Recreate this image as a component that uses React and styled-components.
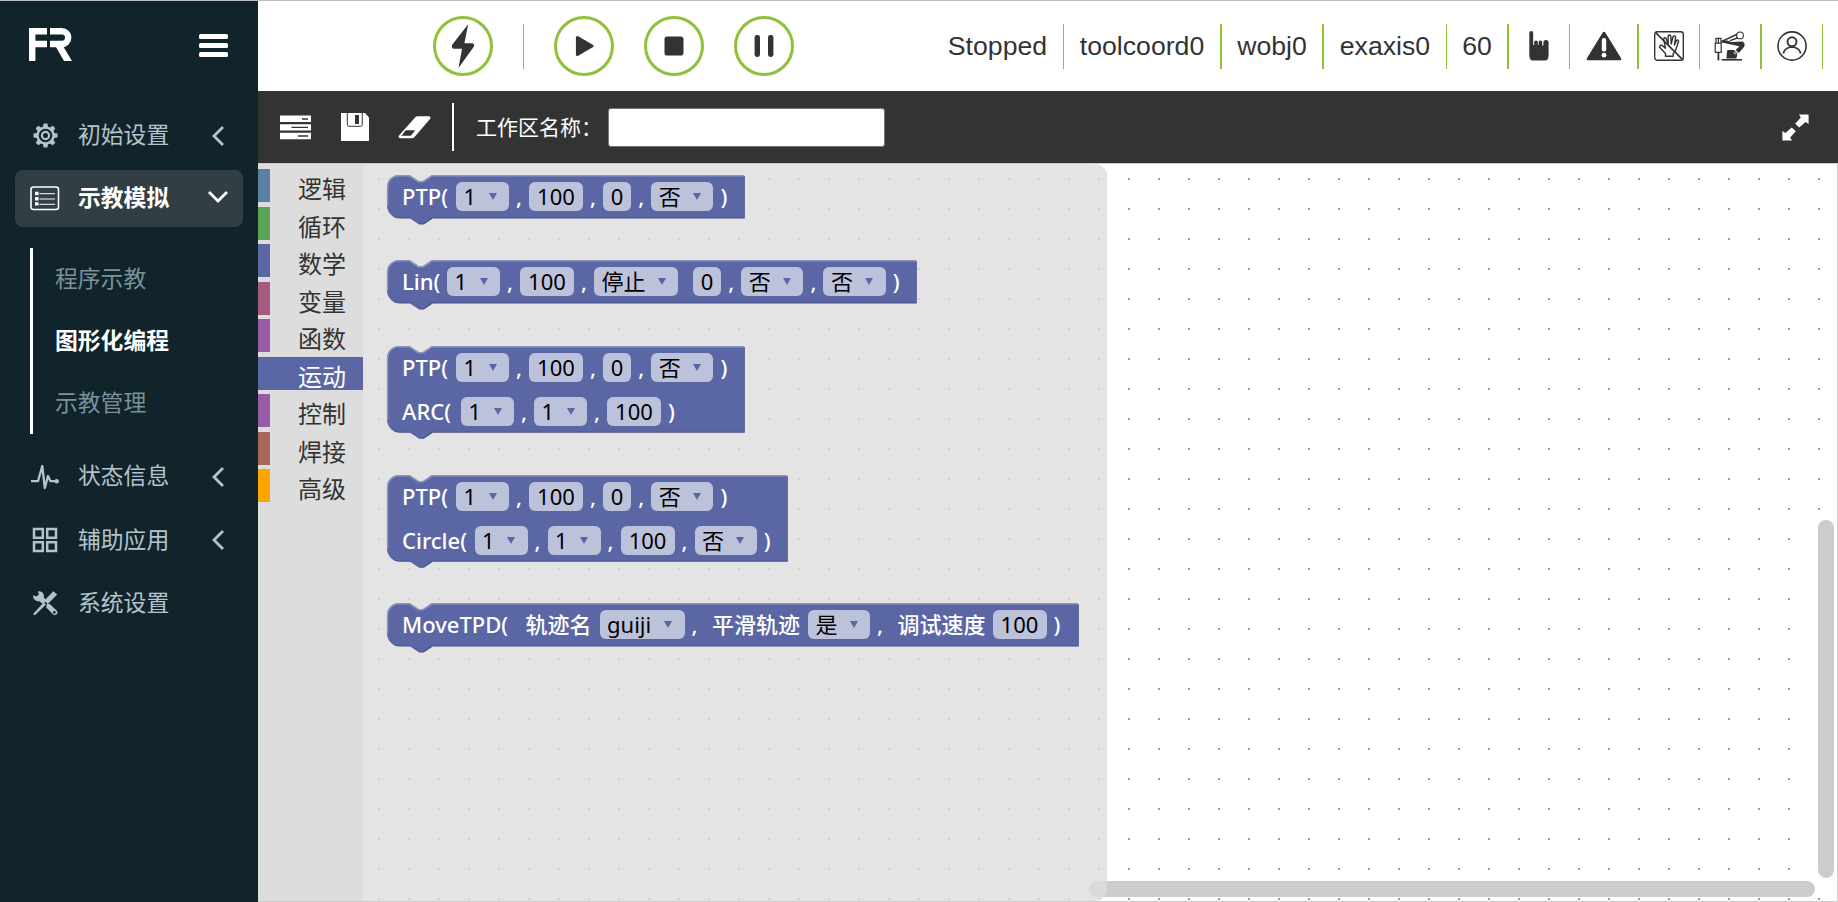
import React from "react";
import styled, { createGlobalStyle } from "styled-components";

const INK = "#333";
const GREEN = "#8fc13a";
const BLOCK = "#5b67a5";

const Global = createGlobalStyle`
  * { box-sizing: border-box; }
  html, body { margin: 0; padding: 0; overflow: hidden; }
  body { font-family: "Noto Sans", "Noto Sans CJK SC", sans-serif; }
  svg { display: block; flex: none; }
`;

const Page = styled.div`
  display: flex;
  width: 1838px;
  height: 902px;
  border-top: 1px solid #bbb;
  background: #fff;
  overflow: hidden;
`;

/* ---------- sidebar ---------- */
const Sidebar = styled.aside`
  width: 258px;
  flex: none;
  background: #11242b;
  font-family: "Noto Sans CJK SC", sans-serif;
`;
const Brand = styled.div`
  height: 106px;
  padding: 27px 30px 0 29px;
  display: flex;
  justify-content: space-between;
`;
const Burger = styled.div`
  width: 29px;
  margin-top: 6px;
  display: flex;
  flex-direction: column;
  gap: 4px;
`;
const BurgerBar = styled.i`
  height: 5px;
  border-radius: 1.5px;
  background: #fff;
`;
const MenuItem = styled.div`
  height: 57px;
  margin: 0 15px 6.3px;
  padding-left: 15px;
  border-radius: 8px;
  display: flex;
  align-items: center;
  color: ${(p) => (p.$active ? "#fff" : "#b4c4cc")};
  background: ${(p) => (p.$active ? "#313f44" : "transparent")};
  font-weight: ${(p) => (p.$active ? 700 : 400)};
`;
const MenuIcon = styled.span`
  width: 30px;
  display: flex;
  justify-content: center;
`;
const MenuText = styled.span`
  margin-left: 18px;
  width: 125px;
  font-size: 22.8px;
  line-height: 30px;
  margin-top: -3px;
`;
const SubMenu = styled.div`
  margin: 21px 0 14px 30px;
  height: 186px;
  border-left: 3px solid #fff;
  padding-left: 22px;
`;
const SubItem = styled.div`
  height: 62px;
  display: flex;
  align-items: center;
  padding-bottom: 3px;
  font-size: 22.8px;
  color: ${(p) => (p.$active ? "#fff" : "#7b929c")};
  font-weight: ${(p) => (p.$active ? 700 : 400)};
`;

/* ---------- header ---------- */
const Main = styled.main`
  flex: 1;
  display: flex;
  flex-direction: column;
  min-width: 0;
`;
const Header = styled.header`
  height: 90px;
  flex: none;
  display: flex;
  justify-content: space-between;
  padding: 15px 15px 0 175px;
`;
const Controls = styled.div`
  display: flex;
  gap: 30px;
`;
const RoundButton = styled.button`
  width: 60px;
  height: 60px;
  padding: 0;
  border: 3px solid ${GREEN};
  border-radius: 50%;
  background: #fff;
  display: flex;
  align-items: center;
  justify-content: center;
`;
const ControlRule = styled.i`
  width: 1px;
  height: 45px;
  margin-top: 8px;
  background: ${GREEN};
`;
const Status = styled.div`
  display: flex;
  margin-top: 8px;
`;
const StatusItem = styled.div`
  width: ${(p) => p.$w}px;
  height: 45px;
  border-right: ${(p) => p.$rule || 1}px solid ${GREEN};
  display: flex;
  align-items: center;
  justify-content: center;
  padding-bottom: 1px;
  font-family: "Liberation Sans", Arial, sans-serif;
  font-size: 26.67px;
  color: ${INK};
  white-space: nowrap;
`;

/* ---------- workspace bar ---------- */
const WorkBar = styled.div`
  height: 72px;
  flex: none;
  background: #333;
  display: flex;
  align-items: center;
  padding: 0 29px 0 22px;
`;
const BarIcon = styled.span`
  width: ${(p) => p.$w}px;
  margin-right: ${(p) => p.$gap}px;
  display: flex;
`;
const BarRule = styled.i`
  width: 2px;
  height: 48px;
  background: #fff;
`;
const BarLabel = styled.label`
  margin: -3px 0 0 22px;
  width: 132px;
  font-family: "Noto Sans CJK SC", sans-serif;
  font-size: 21px;
  line-height: 30px;
  color: #fff;
  white-space: nowrap;
`;
const NameInput = styled.input`
  width: 277px;
  height: 39px;
  padding: 0 10px;
  border: 1px solid #767676;
  border-radius: 3px;
  background: #fff;
`;
const Expand = styled.span`
  margin-left: auto;
`;

/* ---------- block editor ---------- */
const Editor = styled.section`
  flex: 1;
  display: flex;
  position: relative;
  border: 1px solid #ccc;
  border-left: 0;
  background-color: #fff;
  background-image: radial-gradient(circle at 15px 15px, #999 0.9px, transparent 1.3px);
  background-size: 30px 30px;
  background-position: 106px 0px;
`;
const Toolbox = styled.nav`
  width: 105px;
  flex: none;
  padding-top: 5px;
  background: #ddd;
`;
const Category = styled.div`
  height: 33px;
  margin-bottom: 4.5px;
  border-left: 12px solid ${(p) => p.$color};
  padding-left: 28px;
  background: ${(p) => (p.$active ? p.$color : "transparent")};
  color: ${(p) => (p.$active ? "#fff" : INK)};
  font-family: "Noto Sans CJK SC", sans-serif;
  font-size: 24px;
  line-height: 37px;
`;
const Flyout = styled.div`
  width: 744px;
  flex: none;
  position: relative;
  z-index: 1;
  padding: 11px 0 0 23.5px;
  border-radius: 0 12px 12px 0;
  background: rgba(221, 221, 221, 0.8);
`;
const BlockBox = styled.div`
  position: relative;
  width: ${(p) => p.$w}px;
  height: ${(p) => p.$h}px;
  margin-bottom: 42.4px;
`;
const BlockShape = styled.svg`
  position: absolute;
  left: 0;
  top: 0;
  overflow: visible;
`;
const BlockRow = styled.div`
  position: relative;
  display: flex;
  align-items: flex-start;
  height: 43.9px;
  padding: 7px 0 0 15.5px;
`;
const Label = styled.span`
  width: ${(p) => p.$w}px;
  flex: none;
  text-align: ${(p) => p.$align || "left"};
  color: #fff;
  font-size: 22px;
  font-weight: 500;
  line-height: 29px;
  white-space: pre;
`;
const Field = styled.span`
  width: ${(p) => p.$w}px;
  height: 29px;
  flex: none;
  display: flex;
  align-items: center;
  justify-content: ${(p) => (p.$menu ? "space-between" : "center")};
  padding: ${(p) => (p.$menu ? "0 12.5px 0 7.5px" : "0")};
  border-radius: 6px;
  background: #bdc2db;
  color: #000;
  font-size: 22px;
  line-height: 29px;
`;
const Arrow = styled.i`
  border: 4px solid transparent;
  border-top: 7px solid ${BLOCK};
  border-bottom: 0;
`;
const HScroll = styled.div`
  position: absolute;
  left: 831px;
  bottom: 4px;
  width: 726px;
  height: 16px;
  border-radius: 8px;
  background: #ccc;
`;
const VScroll = styled.div`
  position: absolute;
  right: 3px;
  top: 356px;
  width: 16px;
  height: 358px;
  border-radius: 8px;
  background: #ccc;
`;

/* ---------- icons ---------- */
const Logo = () => (
  <svg width="43" height="33" viewBox="0 0 43 33" fill="none" stroke="#fff" strokeWidth="6.4">
    <path d="M18 3.2H3.2V33M5 16H18" />
    <path d="M21 3.2H32.8a6.4 6.4 0 0 1 0 12.8H21" />
    <path d="M26.4 18H34L43 33H35Z" fill="#fff" stroke="none" />
  </svg>
);
const GearIcon = () => (
  <svg width="25" height="25" viewBox="-12.5 -12.5 25 25" fill="none" stroke="currentColor">
    <circle r="8" strokeWidth="2.4" />
    <circle r="3.6" strokeWidth="2.2" />
    {[0, 45, 90, 135, 180, 225, 270, 315].map((a) => (
      <path key={a} d="M-1.9 -12H1.9L2.6 -8H-2.6Z" fill="currentColor" stroke="none" transform={`rotate(${a})`} />
    ))}
  </svg>
);
const ListIcon = () => (
  <svg width="30" height="25" viewBox="0 0 30 25" fill="none" stroke="currentColor">
    <rect x="1" y="1" width="27.5" height="22.5" rx="2.5" strokeWidth="1.6" />
    <path d="M5 7.5h3.6M5 12.7h3.6M5 17.9h3.6" strokeWidth="3.4" />
    <path d="M9.5 7.7H25M9.5 13H25M9.5 18.3H25" strokeWidth="1" />
  </svg>
);
const PulseIcon = () => (
  <svg width="30" height="26" viewBox="0 0 30 26" fill="none" stroke="currentColor" strokeWidth="2.3" strokeLinejoin="round">
    <path d="M1 17.2H8L12.3 2L14.8 24L18 12L20.5 17.2H26" />
    <circle cx="26.7" cy="17.2" r="2.2" fill="currentColor" stroke="none" />
  </svg>
);
const GridIcon = () => (
  <svg width="26" height="26" viewBox="0 0 26 26" fill="none" stroke="currentColor" strokeWidth="2.5">
    <rect x="2" y="2" width="8.8" height="8.8" />
    <rect x="15.2" y="2" width="8.8" height="8.8" />
    <rect x="2" y="15.2" width="8.8" height="8.8" />
    <rect x="15.2" y="15.2" width="8.8" height="8.8" />
  </svg>
);
const ToolsIcon = () => (
  <svg width="26" height="26" viewBox="0 0 26 26" fill="currentColor">
    <path d="M1.2 5.2L4.5 6.5 7 4.2 5.8 1.4C9.5.5 12.6 3.5 11.8 7.6L14.5 10.5 10.8 14 7.4 11.2C4 11.8 .6 9 1.2 5.2Z" />
    <path fillRule="evenodd" d="M15 13.5L18 14.2 24.6 20.4C27 23 24 26.3 21.2 24.4L14.2 17.4ZM22.3 20.9a1.4 1.4 0 1 0 .1 0Z" />
    <path d="M21.3 1.3L25.2 4.6 15.8 14 12.2 10.8Z" />
    <path d="M11.8 12.2L14 14.4 3.2 25 1.4 24.8 1.8 23.2Z" />
  </svg>
);
const ChevronLeft = () => (
  <svg width="14" height="22" viewBox="0 0 14 22" fill="none" stroke="currentColor" strokeWidth="2.8">
    <path d="M12 2L3 11L12 20" />
  </svg>
);
const ChevronDown = () => (
  <svg width="22" height="18" viewBox="0 0 22 18" fill="none" stroke="currentColor" strokeWidth="2.8">
    <path d="M2 2L11 11L20 2" />
  </svg>
);

const BoltIcon = () => (
  <svg width="24" height="46" viewBox="0 0 24 46" fill={INK}>
    <path d="M17.2 1.2L1.2 21.8Q0 25.6 3 25.7H11L7.5 45L22.6 24Q24.2 20.4 21 20.2H13.4Z" />
  </svg>
);
const PlayIcon = () => (
  <svg width="20" height="24" viewBox="0 0 20 24">
    <path d="M3.4 3.5V20.5L18 12Z" fill={INK} stroke={INK} strokeWidth="3" strokeLinejoin="round" />
  </svg>
);
const StopIcon = () => (
  <svg width="20" height="20" viewBox="0 0 20 20">
    <rect x=".5" y=".5" width="19" height="19" rx="2.8" fill={INK} />
  </svg>
);
const PauseIcon = () => (
  <svg width="20" height="22" viewBox="0 0 20 22" fill={INK}>
    <rect x=".6" width="5.4" height="22" rx="2.4" />
    <rect x="14" width="5.4" height="22" rx="2.4" />
  </svg>
);

const PointerIcon = () => (
  <svg width="20" height="30" viewBox="0 0 20 30" fill={INK}>
    <path d="M.3 2A1.9 1.9 0 0 1 4.2 2V14H5.2V11.2A1.8 1.8 0 0 1 8.8 11.2V14H9.6V11.2A1.8 1.8 0 0 1 13.2 11.2V14.4H14.4V11.7A1.9 1.9 0 0 1 19.6 11.7V24Q19.6 29.5 16 29.5H4Q.3 29.5 .3 24Z" />
  </svg>
);
const WarningIcon = () => (
  <svg width="36" height="30" viewBox="0 0 36 30">
    <path d="M18 2L34 28H2Z" fill={INK} stroke={INK} strokeWidth="2.6" strokeLinejoin="round" />
    <rect x="15.8" y="7" width="4.4" height="13.6" rx="2.2" fill="#fff" />
    <circle cx="18" cy="24.2" r="2.4" fill="#fff" />
  </svg>
);
const NoHandIcon = () => (
  <svg width="30" height="30" viewBox="0 0 30 30" fill="none" stroke={INK} strokeWidth="1.4" strokeLinejoin="round">
    <rect x=".7" y=".7" width="28.6" height="28.6" rx="2.6" />
    <path d="M11.5 25.2V22.4L5.6 16.2Q5.8 13.6 8.2 14.4L11.4 17.2 9.6 7.6Q11 6 12.2 7.6L14.2 13.4 14.1 4.9Q15.4 3.2 16.8 4.9L17.2 13 19.2 5.3Q21 4.2 21.6 6L20.4 14 22.6 9.2Q24.4 8.4 24.6 10.2L21.2 20.5 19.2 22.4V25.2Z" />
    <path d="M1.2 1.2L28.8 28.8" strokeWidth="1.7" />
  </svg>
);
const RobotIcon = () => (
  <svg width="32" height="30" viewBox="0 0 32 30" fill="none" stroke={INK}>
    <path d="M1.2 12.2H7.2V21.3H1.2ZM2 12V7.4H7V12M4.4 7.4V12" strokeWidth="1.2" />
    <path d="M4.4 21.5V29.4" strokeWidth="1.8" />
    <circle cx="26" cy="4.4" r="3.4" strokeWidth="1.1" />
    <path d="M7.8 10.4L23.2 3.2M16 9.6L24 6.8" strokeWidth="1.5" />
    <path d="M7.6 9.2L13 9.6 17.5 11 28.6 10.6Q32 13 29.8 16.2L24.8 22 21.6 19 25.4 15.2 16 13.2 7.6 11.6Z" fill={INK} stroke="none" />
    <path d="M13 20.4Q13 19 14.4 19H20L23.4 21.8 22.4 27.4H12.4Z" fill={INK} stroke="none" />
    <path d="M7.6 28.8H28" strokeWidth="1.6" />
    <circle cx="21.2" cy="21.8" r="1.1" stroke="#fff" strokeWidth=".7" />
  </svg>
);
const UserIcon = () => (
  <svg width="30" height="30" viewBox="0 0 30 30" fill="none" stroke={INK} strokeWidth="1.6">
    <circle cx="15" cy="15" r="14.1" />
    <circle cx="15" cy="10.8" r="4.5" strokeWidth="1.9" />
    <path d="M6.3 22.4C8 14 22 14 23.7 22.4" strokeWidth="1.9" />
  </svg>
);

const StackIcon = () => (
  <svg width="31" height="25" viewBox="0 0 31 25">
    <path fill="#fff" d="M0 .5H31V7H0ZM0 9.2H31V15.6H0ZM0 17.8H31V24.3H0Z" />
    <path stroke="#333" strokeWidth="1.4" d="M22 4H28M11.5 12.4H28M18 21H28" />
  </svg>
);
const SaveIcon = () => (
  <svg width="28" height="28" viewBox="0 0 28 28">
    <path fill="#fff" d="M0 0H24L28 4.5V28H0Z" />
    <path fill="none" stroke="#333" strokeWidth="1" d="M6.3 0V11.5Q6.3 13.3 8 13.3H19.5Q21.3 13.3 21.3 11.5V0" />
    <path fill="#333" d="M14 2H18V11H14Z" />
  </svg>
);
const EraserIcon = () => (
  <svg width="33" height="23" viewBox="0 0 33 23">
    <path fill="#fff" d="M17.5 1Q18.3 .3 19.5 .3H31Q33.3 .6 32 3L16.5 21Q15.4 22.2 14 22.2H2Q-.4 21.7 1 19.4Z" />
    <path fill="#333" d="M7.8 14.2H17.2L12.8 19.7H3.4Z" />
  </svg>
);
const ExpandIcon = () => (
  <svg width="27" height="27" viewBox="0 0 27 27" fill="#fff">
    <path d="M17 .4H26.6V10L23.6 8 17.2 13.6 13.2 9.8 18.8 3.6Z" />
    <path d="M10 26.6H.4V17L3.4 19 9.8 13.4 13.8 17.2 8.2 23.4Z" />
  </svg>
);

/* ---------- data ---------- */
const MENU_TOP = [
  { text: "初始设置", Icon: GearIcon, Chevron: ChevronLeft },
  { text: "示教模拟", Icon: ListIcon, Chevron: ChevronDown, active: true },
];
const SUBMENU = [
  { text: "程序示教" },
  { text: "图形化编程", active: true },
  { text: "示教管理" },
];
const MENU_BOTTOM = [
  { text: "状态信息", Icon: PulseIcon, Chevron: ChevronLeft },
  { text: "辅助应用", Icon: GridIcon, Chevron: ChevronLeft },
  { text: "系统设置", Icon: ToolsIcon },
];
const STATUS = [
  { w: 132, body: "Stopped" },
  { w: 158, rule: 2, body: "toolcoord0" },
  { w: 102, rule: 2, body: "wobj0" },
  { w: 123, body: "exaxis0" },
  { w: 62, rule: 2, body: "60" },
  { w: 61, body: <PointerIcon /> },
  { w: 69, rule: 2, body: <WarningIcon /> },
  { w: 61, body: <NoHandIcon /> },
  { w: 62, rule: 2, body: <RobotIcon /> },
  { w: 61, body: <UserIcon /> },
];
const CATEGORIES = [
  ["逻辑", "#5b80a5"],
  ["循环", "#5ba55b"],
  ["数学", "#5b67a5"],
  ["变量", "#a55b80"],
  ["函数", "#995ba5"],
  ["运动", "#5b67a5"],
  ["控制", "#995ba5"],
  ["焊接", "#a5675b"],
  ["高级", "#ffa500"],
];

const text = (t, w, align) => ({ t, w, align });
const input = (t, w) => ({ t, w, field: true });
const menu = (t, w) => ({ t, w, field: true, menu: true });
const comma = text(",", 20, "center");
const close = text(")", 21, "center");
const n1 = menu("1", 53);
const n100 = input("100", 54);
const n0 = input("0", 28.3);
const no = menu("否", 62.2);
const PTP = [text("PTP(", 54), n1, comma, n100, comma, n0, comma, no, close];

const BLOCKS = [
  { w: 357, rows: [PTP] },
  {
    w: 529,
    rows: [[text("Lin(", 45), n1, comma, n100, comma, menu("停止", 84.3), text("", 14.7), n0, comma, no, comma, no, close]],
  },
  { w: 357, rows: [PTP, [text("ARC(", 59), n1, comma, n1, comma, n100, close]] },
  { w: 400, rows: [PTP, [text("Circle(", 72.6), n1, comma, n1, comma, n100, comma, no, close]] },
  {
    w: 691,
    rows: [
      [
        text("MoveTPD(", 123.5),
        text("轨迹名", 74),
        menu("guiji", 85),
        text(",", 20, "center"),
        text("", 7.5),
        text("平滑轨迹", 96),
        menu("是", 62),
        text(",", 20, "center"),
        text("", 7.5),
        text("调试速度", 95),
        n100,
        close,
      ],
    ],
  },
];

function Block({ w, rows }) {
  const h = rows.length === 1 ? 42.6 : 85.8;
  const top = `M0 12A12 12 0 0 1 12 0H22.5l9 6h4.5l9 -6H${w}`;
  const outline = `${top}V${h}H45l-9 6h-4.5l-9 -6H12A12 12 0 0 1 0 ${h - 12}Z`;
  return (
    <BlockBox $w={w} $h={rows.length === 1 ? 43.1 : 86.3}>
      <BlockShape width={w} height={h}>
        <path d={outline} fill="#494f84" transform="translate(.8 1)" />
        <path d={outline} fill={BLOCK} />
        <path
          d={`M.6 ${h - 12}V12A11.4 11.4 0 0 1 12 .7H22.3l9 6h5l9 -6H${w}`}
          fill="none"
          stroke="#8c95c0"
          strokeWidth="1.4"
        />
      </BlockShape>
      {rows.map((row, i) => (
        <BlockRow key={i}>
          {row.map((c, j) =>
            c.field ? (
              <Field key={j} $w={c.w} $menu={c.menu}>
                {c.t}
                {c.menu && <Arrow />}
              </Field>
            ) : (
              <Label key={j} $w={c.w} $align={c.align}>
                {c.t}
              </Label>
            )
          )}
        </BlockRow>
      ))}
    </BlockBox>
  );
}

const renderMenu = ({ text: label, Icon, Chevron, active }) => (
  <MenuItem key={label} $active={active}>
    <MenuIcon>
      <Icon />
    </MenuIcon>
    <MenuText>{label}</MenuText>
    {Chevron && (
      <MenuIcon>
        <Chevron />
      </MenuIcon>
    )}
  </MenuItem>
);

export default function App() {
  return (
    <Page>
      <Global />
      <Sidebar>
        <Brand>
          <Logo />
          <Burger>
            <BurgerBar />
            <BurgerBar />
            <BurgerBar />
          </Burger>
        </Brand>
        {MENU_TOP.map(renderMenu)}
        <SubMenu>
          {SUBMENU.map((s) => (
            <SubItem key={s.text} $active={s.active}>
              {s.text}
            </SubItem>
          ))}
        </SubMenu>
        {MENU_BOTTOM.map(renderMenu)}
      </Sidebar>
      <Main>
        <Header>
          <Controls>
            <RoundButton>
              <BoltIcon />
            </RoundButton>
            <ControlRule />
            <RoundButton>
              <PlayIcon />
            </RoundButton>
            <RoundButton>
              <StopIcon />
            </RoundButton>
            <RoundButton>
              <PauseIcon />
            </RoundButton>
          </Controls>
          <Status>
            {STATUS.map((s, i) => (
              <StatusItem key={i} $w={s.w} $rule={s.rule}>
                {s.body}
              </StatusItem>
            ))}
          </Status>
        </Header>
        <WorkBar>
          <BarIcon $w={31} $gap={30}>
            <StackIcon />
          </BarIcon>
          <BarIcon $w={28} $gap={29}>
            <SaveIcon />
          </BarIcon>
          <BarIcon $w={33} $gap={21}>
            <EraserIcon />
          </BarIcon>
          <BarRule />
          <BarLabel>工作区名称：</BarLabel>
          <NameInput />
          <Expand>
            <ExpandIcon />
          </Expand>
        </WorkBar>
        <Editor>
          <HScroll />
          <VScroll />
          <Toolbox>
            {CATEGORIES.map(([name, color]) => (
              <Category key={name} $color={color} $active={name === "运动"}>
                {name}
              </Category>
            ))}
          </Toolbox>
          <Flyout>
            {BLOCKS.map((b, i) => (
              <Block key={i} {...b} />
            ))}
          </Flyout>
        </Editor>
      </Main>
    </Page>
  );
}
